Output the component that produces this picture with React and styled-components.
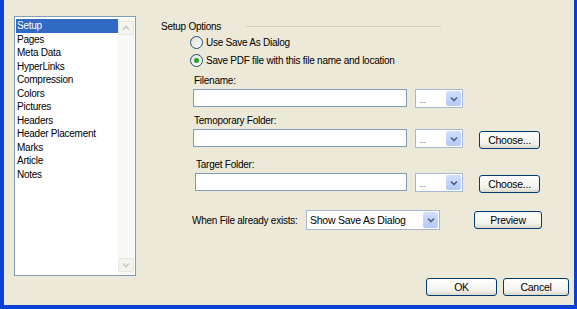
import styled, { createGlobalStyle } from "styled-components";

const GlobalStyle = createGlobalStyle`
  html, body {
    margin: 0;
    padding: 0;
    background: #ece9d8;
  }
  * {
    box-sizing: border-box;
  }
`;

const pages = [
  "Setup",
  "Pages",
  "Meta Data",
  "HyperLinks",
  "Compression",
  "Colors",
  "Pictures",
  "Headers",
  "Header Placement",
  "Marks",
  "Article",
  "Notes",
];

function Chevron({ color = "#4d6185" }) {
  return (
    <svg width="8" height="6" viewBox="0 0 8 6">
      <path d="M1 1.5 L4 4.5 L7 1.5" fill="none" stroke={color} strokeWidth="1.6" />
    </svg>
  );
}

function ChevronUp({ color = "#c9c8bf" }) {
  return (
    <svg width="8" height="6" viewBox="0 0 8 6">
      <path d="M1 4.5 L4 1.5 L7 4.5" fill="none" stroke={color} strokeWidth="1.6" />
    </svg>
  );
}

function ComboBox({ value = "...", width = 47, big }) {
  return (
    <Combo $width={width} $big={big}>
      <ComboText $big={big}>{value}</ComboText>
      <DropButton>
        <Chevron />
      </DropButton>
    </Combo>
  );
}

function PathField({ label, choose, shift }) {
  return (
    <Field $shift={shift}>
      <FieldLabel>{label}</FieldLabel>
      <FieldRow>
        <TextInput $width={shift ? 212 : 214} />
        <ComboBox width={48} />
        {choose && (
          <XpButton $width={61} $top={2} $left={16}>
            Choose...
          </XpButton>
        )}
      </FieldRow>
    </Field>
  );
}

export default function App() {
  return (
    <>
      <GlobalStyle />
      <Window>
        <Body>
          <ListBox>
            <Items>
              {pages.map((p, i) => (
                <Item key={p} $selected={i === 0}>
                  {p}
                </Item>
              ))}
            </Items>
            <ScrollBar>
              <ScrollArrow>
                <ChevronUp />
              </ScrollArrow>
              <ScrollArrow>
                <Chevron color="#c9c8bf" />
              </ScrollArrow>
            </ScrollBar>
          </ListBox>
          <Pane>
            <GroupHeader>
              <span>Setup Options</span>
              <Rule />
            </GroupHeader>
            <Options>
              <RadioRow>
                <Radio />
                Use Save As Dialog
              </RadioRow>
              <RadioRow>
                <Radio $checked />
                Save PDF file with this file name and location
              </RadioRow>
              <PathField label="Filename:" />
              <PathField label="Temoporary Folder:" choose />
              <PathField label="Target Folder:" choose shift />
              <ExistsRow>
                <ExistsLabel>When File already exists:</ExistsLabel>
                <ComboBox value="Show Save As Dialog" width={134} big />
                <XpButton $width={68} $left={34}>Preview</XpButton>
              </ExistsRow>
            </Options>
          </Pane>
        </Body>
        <Footer>
          <XpButton $width={71}>OK</XpButton>
          <XpButton $width={66}>Cancel</XpButton>
        </Footer>
      </Window>
    </>
  );
}

const Window = styled.div`
  width: 577px;
  height: 309px;
  display: flex;
  flex-direction: column;
  background: #ece9d8;
  border-left: 4px solid #0b3fd6;
  border-right: 3px solid #0b3fd6;
  border-bottom: 4px solid #0b3fd6;
  font-family: "Liberation Sans", Arial, sans-serif;
  font-size: 10px;
  letter-spacing: -0.25px;
  color: #000;
`;

const Body = styled.div`
  display: flex;
  padding: 16px 0 0 10px;
`;

//------------LIST----------------//

const ListBox = styled.div`
  width: 122px;
  height: 260px;
  border: 1px solid #7f9db9;
  background: #fff;
  display: flex;
  padding: 1px;
`;

const Items = styled.div`
  flex: 1;
  padding-top: 1px;
`;

const Item = styled.div`
  height: 13.5px;
  line-height: 13.5px;
  padding-left: 1px;
  white-space: nowrap;
  background: ${(p) => (p.$selected ? "#316ac5" : "transparent")};
  color: ${(p) => (p.$selected ? "#fff" : "#000")};
`;

const ScrollBar = styled.div`
  width: 16px;
  display: flex;
  flex-direction: column;
  justify-content: space-between;
  background: #f8f8f4;
  padding: 3px 0 2px;
`;

const ScrollArrow = styled.div`
  height: 14px;
  border: 1px solid #e8e7df;
  border-radius: 2px;
  background: #f4f3ee;
  display: flex;
  align-items: center;
  justify-content: center;
`;

//------------OPTIONS----------------//

const Pane = styled.div`
  margin-left: 25px;
  display: flex;
  flex-direction: column;
`;

const GroupHeader = styled.div`
  display: flex;
  align-items: center;
  height: 14px;
  margin-top: 3px;
`;

const Rule = styled.div`
  width: 195px;
  height: 1px;
  background: #d0d0bf;
  margin-left: 25px;
`;

const Options = styled.div`
  padding-left: 29px;
  display: flex;
  flex-direction: column;
`;

const RadioRow = styled.div`
  display: flex;
  align-items: center;
  height: 18px;
  gap: 3px;
`;

const Radio = styled.span`
  width: 13px;
  height: 13px;
  border-radius: 50%;
  border: 1px solid #1c5180;
  background: linear-gradient(135deg, #dcdcd7, #fff);
  display: flex;
  align-items: center;
  justify-content: center;

  &::after {
    content: "";
    width: 5px;
    height: 5px;
    border-radius: 50%;
    background: ${(p) => (p.$checked ? "#21a121" : "transparent")};
  }
`;

const Field = styled.div`
  margin-top: ${(p) => (p.$shift ? 9 : 6)}px;
  padding-left: ${(p) => (p.$shift ? 5 : 3)}px;
  &:nth-of-type(3) {
    margin-top: 5px;
  }
`;

const FieldLabel = styled.div`
  height: 13px;
  line-height: 13px;
  margin-bottom: 2px;
  padding-left: 1px;
`;

const FieldRow = styled.div`
  display: flex;
  align-items: flex-start;
`;

const TextInput = styled.div`
  width: ${(p) => p.$width}px;
  height: 18px;
  border: 1px solid #7f9db9;
  background: #fff;
`;

const Combo = styled.div`
  width: ${(p) => p.$width}px;
  height: ${(p) => (p.$big ? 20 : 19)}px;
  margin-left: ${(p) => (p.$big ? 6 : 8)}px;
  border: 1px solid #a5b9d6;
  background: #fff;
  display: flex;
  align-items: stretch;
  padding: 1px;
`;

const ComboText = styled.div`
  flex: 1;
  padding-left: 2px;
  font-size: ${(p) => (p.$big ? "10.5px" : "9px")};
  line-height: ${(p) => (p.$big ? "16px" : "18px")};
  color: ${(p) => (p.$big ? "#000" : "#666")};
  white-space: nowrap;
  overflow: hidden;
`;

const DropButton = styled.div`
  width: 15px;
  border-radius: 2px;
  background: linear-gradient(#d3e0fd, #b3c9f8);
  display: flex;
  align-items: center;
  justify-content: center;
`;

const XpButton = styled.div`
  width: ${(p) => p.$width}px;
  height: 18px;
  margin-top: ${(p) => p.$top || 0}px;
  margin-left: ${(p) => p.$left ?? 17}px;
  border: 1px solid #003c74;
  border-radius: 3px;
  background: linear-gradient(#ffffff, #f3f2ed 70%, #dcd8cc);
  display: flex;
  align-items: center;
  justify-content: center;
  font-size: 10.5px;
`;

const ExistsRow = styled.div`
  display: flex;
  align-items: center;
  margin-top: 17px;
  padding-left: 2px;
`;

const ExistsLabel = styled.span`
  width: 108px;
  white-space: nowrap;
`;

//------------FOOTER----------------//

const Footer = styled.div`
  display: flex;
  justify-content: flex-end;
  gap: 6px;
  margin-top: 2px;
  padding-right: 5px;

  & > div {
    margin-left: 0;
  }
`;
